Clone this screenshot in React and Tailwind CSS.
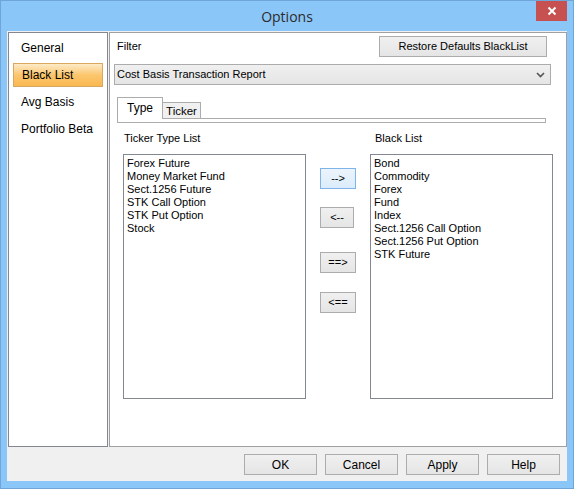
import React from 'react'

const NAV = ['General', 'Black List', 'Avg Basis', 'Portfolio Beta']
const TYPES = ['Forex Future', 'Money Market Fund', 'Sect.1256 Future', 'STK Call Option', 'STK Put Option', 'Stock']
const BLACK = ['Bond', 'Commodity', 'Forex', 'Fund', 'Index', 'Sect.1256 Call Option', 'Sect.1256 Put Option', 'STK Future']

const btn = 'flex items-center justify-center border border-[#acacac] bg-gradient-to-b from-[#f0f0f0] to-[#e5e5e5]'

function ListBox({ items }) {
  return (
    <div className="w-[183px] h-[245px] border border-[#828790] bg-white pt-[2px] pl-[3px]">
      {items.map((t) => (
        <div key={t} className="leading-[13px] h-[13px] whitespace-nowrap">{t}</div>
      ))}
    </div>
  )
}

export default function App() {
  return (
    <div className="w-[574px] h-[489px] border border-[#6fa6da] bg-[#8bc6f8] flex flex-col font-['Liberation_Sans',Arial,sans-serif] text-[11px] text-black">
      {/* title bar */}
      <div className="relative h-[30px] flex items-center justify-center">
        <span className="font-['Open_Sans',sans-serif] text-[14px] text-[#2b2b2b] mt-[1px]">Options</span>
        <div className="absolute top-0 right-[6px] w-[31px] h-[20px] bg-[#c75050] flex items-center justify-center">
          <svg width="10" height="10" viewBox="0 0 10 10">
            <path d="M1.5 1.5 L8.5 8.5 M8.5 1.5 L1.5 8.5" stroke="#fff" strokeWidth="2" />
          </svg>
        </div>
      </div>

      {/* client area */}
      <div className="mx-[6px] h-[450px] bg-[#f0f0f0] flex flex-col">
        <div className="flex mt-[1px] h-[415px]">
          {/* left nav */}
          <div className="ml-[1px] w-[100px] border border-[#828790] bg-white flex flex-col pt-[3px] gap-[3px]">
            {NAV.map((n) => (
              <div
                key={n}
                className={`mx-[4px] h-[24px] flex items-center pl-[8px] text-[12px] ${
                  n === 'Black List'
                    ? 'border border-[#d9a860] bg-gradient-to-b from-[#fdebc6] via-[#fbc66d] to-[#f9b850]'
                    : ''
                }`}
              >
                {n}
              </div>
            ))}
          </div>

          {/* right page */}
          <div className="ml-[1px] w-[458px] border border-[#a0a0a0] bg-white flex flex-col">
            <div className="mt-[3px] h-[21px] flex items-center">
              <span className="ml-[7px]">Filter</span>
              <div className={`${btn} ml-auto mr-[19px] w-[168px] h-[21px]`}>Restore Defaults BlackList</div>
            </div>

            <div className="mt-[7px] ml-[4px] w-[437px] h-[21px] border border-[#acacac] bg-gradient-to-b from-[#f0f0f0] to-[#e5e5e5] flex items-center pl-[2px] pr-[5px]">
              <span>Cost Basis Transaction Report</span>
              <svg className="ml-auto" width="9" height="6" viewBox="0 0 9 6">
                <path d="M1 1 L4.5 4.5 L8 1" stroke="#555" strokeWidth="1.6" fill="none" />
              </svg>
            </div>

            {/* tabs */}
            <div className="mt-[12px] ml-[7px] flex items-end">
              <div className="relative z-10 w-[46px] h-[22px] border border-b-0 border-[#acacac] bg-white flex items-center justify-center text-[12px] pb-[2px]">
                Type
              </div>
              <div className="w-[38px] h-[17px] border border-l-0 border-b-0 border-[#acacac] bg-[#f0f0f0] flex items-center justify-center text-[11.5px] pt-[1px]">
                Ticker
              </div>
            </div>
            <div className="-mt-[1px] ml-[7px] w-[429px] h-[5px] border border-[#acacac] bg-white" />

            <div className="mt-[9px] h-[13px] flex leading-[13px]">
              <span className="ml-[14px] w-[251px]">Ticker Type List</span>
              <span>Black List</span>
            </div>

            <div className="mt-[9px] flex items-start">
              <div className="ml-[13px]">
                <ListBox items={TYPES} />
              </div>
              <div className="ml-[14px] w-[36px] flex flex-col">
                <div className="mt-[14px] w-[36px] h-[21px] flex items-center justify-center border border-[#7eb4ea] bg-gradient-to-b from-[#ecf4fc] to-[#dcecfc]">--&gt;</div>
                <div className={`${btn} mt-[18px] w-[34px] h-[21px]`}>&lt;--</div>
                <div className={`${btn} mt-[24px] w-[36px] h-[21px]`}>==&gt;</div>
                <div className={`${btn} mt-[19px] w-[36px] h-[21px]`}>&lt;==</div>
              </div>
              <div className="ml-[14px]">
                <ListBox items={BLACK} />
              </div>
            </div>
          </div>
        </div>

        {/* footer buttons */}
        <div className="mt-[7px] flex justify-end gap-[8px] pr-[7px]">
          {['OK', 'Cancel', 'Apply', 'Help'].map((b) => (
            <div key={b} className={`${btn} w-[73px] h-[21px] text-[12px]`}>{b}</div>
          ))}
        </div>
      </div>
    </div>
  )
}
